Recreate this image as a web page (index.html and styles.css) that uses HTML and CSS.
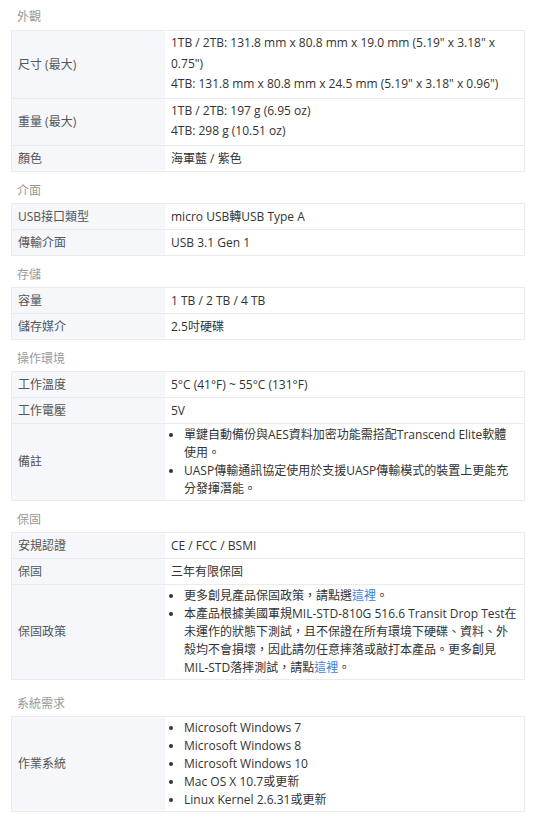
FILE: index.html
```html
<!DOCTYPE html>
<html lang="zh-Hant">
<head>
<meta charset="utf-8">
<link rel="stylesheet" href="styles.css">
</head>
<body>
<div class="spec">
  <h3 class="sec sec-first">外觀</h3>
  <table class="tbl">
    <tr><th>尺寸 (最大)</th><td class="multi">1TB / 2TB: 131.8 mm x 80.8 mm x 19.0 mm (5.19" x 3.18" x 0.75")<br>4TB: 131.8 mm x 80.8 mm x 24.5 mm (5.19" x 3.18" x 0.96")</td></tr>
    <tr><th>重量 (最大)</th><td class="multi">1TB / 2TB: 197 g (6.95 oz)<br>4TB: 298 g (10.51 oz)</td></tr>
    <tr><th>顏色</th><td>海軍藍 / 紫色</td></tr>
  </table>

  <h3 class="sec">介面</h3>
  <table class="tbl">
    <tr><th>USB接口類型</th><td>micro USB轉USB Type A</td></tr>
    <tr><th>傳輸介面</th><td>USB 3.1 Gen 1</td></tr>
  </table>

  <h3 class="sec">存儲</h3>
  <table class="tbl">
    <tr><th>容量</th><td>1 TB / 2 TB / 4 TB</td></tr>
    <tr><th>儲存媒介</th><td>2.5吋硬碟</td></tr>
  </table>

  <h3 class="sec">操作環境</h3>
  <table class="tbl">
    <tr><th>工作溫度</th><td>5°C (41°F) ~ 55°C (131°F)</td></tr>
    <tr><th>工作電壓</th><td>5V</td></tr>
    <tr><th>備註</th><td class="listcell"><ul>
      <li>單鍵自動備份與AES資料加密功能需搭配Transcend Elite軟體使用。</li>
      <li>UASP傳輸通訊協定使用於支援UASP傳輸模式的裝置上更能充分發揮潛能。</li>
    </ul></td></tr>
  </table>

  <h3 class="sec">保固</h3>
  <table class="tbl">
    <tr><th>安規認證</th><td>CE / FCC / BSMI</td></tr>
    <tr><th>保固</th><td>三年有限保固</td></tr>
    <tr><th>保固政策</th><td class="listcell"><ul>
      <li>更多創見產品保固政策，請點選<a href="#">這裡</a>。</li>
      <li>本產品根據美國軍規MIL-STD-810G 516.6 Transit Drop Test在未運作的狀態下測試，且不保證在所有環境下硬碟、資料、外殼均不會損壞，因此請勿任意摔落或敲打本產品。更多創見MIL-STD落摔測試，請點<a href="#">這裡</a>。</li>
    </ul></td></tr>
  </table>

  <h3 class="sec sec-gap">系統需求</h3>
  <table class="tbl">
    <tr><th>作業系統</th><td class="listcell"><ul>
      <li>Microsoft Windows 7</li>
      <li>Microsoft Windows 8</li>
      <li>Microsoft Windows 10</li>
      <li>Mac OS X 10.7或更新</li>
      <li>Linux Kernel 2.6.31或更新</li>
    </ul></td></tr>
  </table>
</div>
</body>
</html>
```

FILE: styles.css
```css
html, body {
  margin: 0;
  padding: 0;
  background: #ffffff;
}
body {
  font-family: "Open Sans", "Noto Sans CJK TC", sans-serif;
  font-size: 12px;
  color: #333333;
}
.spec {
  padding: 0 14px 0 11px;
}
.sec {
  margin: 0;
  padding: 10px 0 3px 6px;
  font-size: 12px;
  font-weight: normal;
  line-height: 18px;
  color: #9a9a9a;
}
.sec-first {
  padding-top: 8px;
  padding-bottom: 4px;
}
.sec-gap {
  padding-top: 15px;
}
.tbl {
  width: 514px;
  border-collapse: collapse;
  border: 1px solid #ebebeb;
}
.tbl th,
.tbl td {
  border-top: 1px solid #ebebeb;
  border-bottom: 1px solid #ebebeb;
  padding: 3px 6px;
  line-height: 19px;
  text-align: left;
  vertical-align: middle;
}
.tbl th {
  width: 141px;
  font-weight: normal;
  color: #555555;
  background: #f5f7fa;
}
.tbl td {
  color: #333333;
  background: #ffffff;
}
.tbl td.multi {
  line-height: 20.5px;
  padding-top: 2px;
  padding-bottom: 3px;
}
.tbl td.listcell {
  padding-top: 2px;
  padding-bottom: 2px;
}
.tbl ul {
  margin: 0;
  padding: 0 0 0 13px;
  line-height: 18px;
}
.tbl li {
  padding-left: 0;
}
.tbl a {
  color: #3b7ddd;
  text-decoration: none;
}
```
